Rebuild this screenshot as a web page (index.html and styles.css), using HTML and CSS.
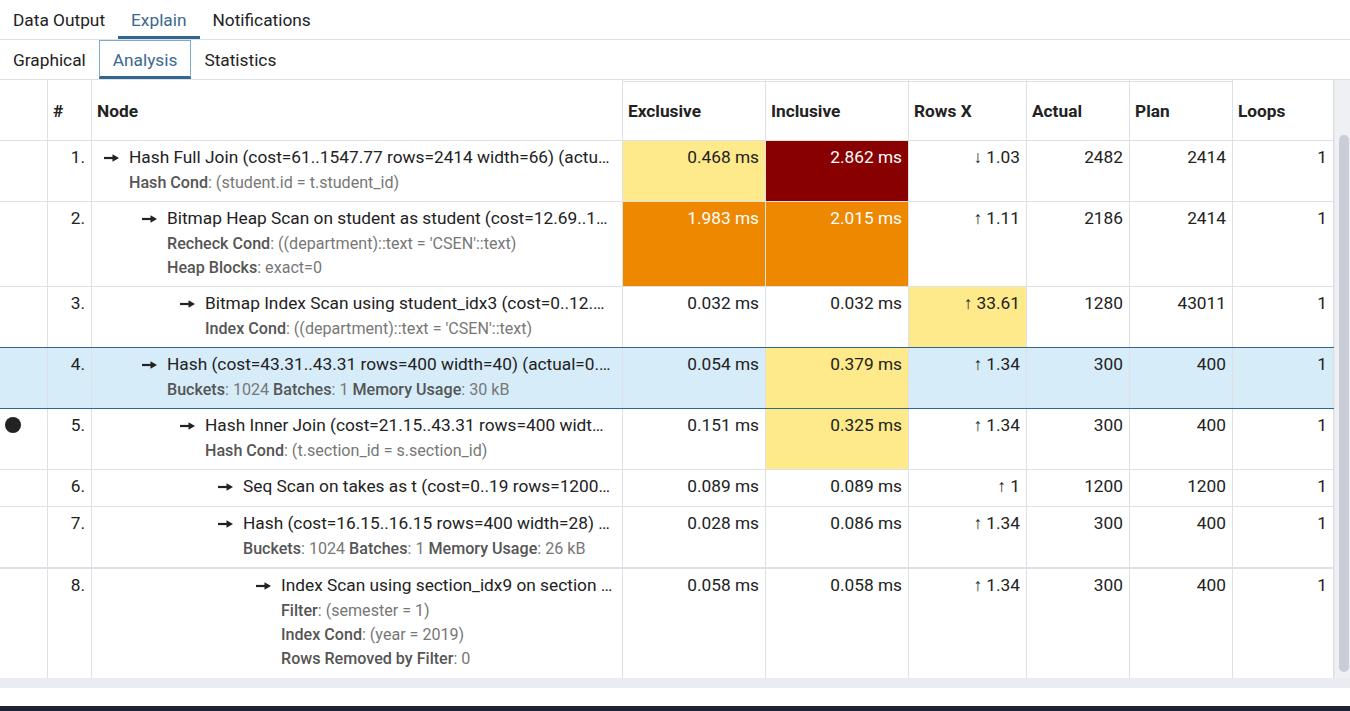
FILE: index.html
```html
<!DOCTYPE html>
<html>
<head>
<meta charset="utf-8">
<title>Explain Analysis</title>
<link rel="stylesheet" href="styles.css">
</head>
<body>
<div class="tabs main-tabs">
  <div class="tab">Data Output</div>
  <div class="tab active">Explain</div>
  <div class="tab">Notifications</div>
</div>
<div class="tabs sub-tabs">
  <div class="tab">Graphical</div>
  <div class="tab active">Analysis</div>
  <div class="tab">Statistics</div>
</div>
<div class="area">
  <div class="table">
    <div class="row head">
      <div class="cell"></div>
      <div class="cell">#</div>
      <div class="cell">Node</div>
      <div class="cell grp">Exclusive</div>
      <div class="cell grp">Inclusive</div>
      <div class="cell grp">Rows X</div>
      <div class="cell grp">Actual</div>
      <div class="cell grp">Plan</div>
      <div class="cell">Loops</div>
    </div>

    <div class="row">
      <div class="cell mark"></div>
      <div class="cell">1.</div>
      <div class="cell node l0">
        <div class="main"><svg class="arr" viewBox="0 0 15 10"><path d="M0 5H10"/><polygon points="8.5,1.2 15,5 8.5,8.8"/></svg><span class="txt">Hash Full Join (cost=61..1547.77 rows=2414 width=66) (actu…</span></div>
        <div class="sub"><b>Hash Cond</b>: (student.id = t.student_id)</div>
      </div>
      <div class="cell yel">0.468 ms</div>
      <div class="cell red">2.862 ms</div>
      <div class="cell">↓ 1.03</div>
      <div class="cell">2482</div>
      <div class="cell">2414</div>
      <div class="cell">1</div>
    </div>

    <div class="row">
      <div class="cell mark"></div>
      <div class="cell">2.</div>
      <div class="cell node l1">
        <div class="main"><svg class="arr" viewBox="0 0 15 10"><path d="M0 5H10"/><polygon points="8.5,1.2 15,5 8.5,8.8"/></svg><span class="txt">Bitmap Heap Scan on student as student (cost=12.69..1…</span></div>
        <div class="sub"><b>Recheck Cond</b>: ((department)::text = 'CSEN'::text)</div>
        <div class="sub"><b>Heap Blocks</b>: exact=0</div>
      </div>
      <div class="cell org">1.983 ms</div>
      <div class="cell org">2.015 ms</div>
      <div class="cell">↑ 1.11</div>
      <div class="cell">2186</div>
      <div class="cell">2414</div>
      <div class="cell">1</div>
    </div>

    <div class="row pre-sel">
      <div class="cell mark"></div>
      <div class="cell">3.</div>
      <div class="cell node l2">
        <div class="main"><svg class="arr" viewBox="0 0 15 10"><path d="M0 5H10"/><polygon points="8.5,1.2 15,5 8.5,8.8"/></svg><span class="txt">Bitmap Index Scan using student_idx3 (cost=0..12.…</span></div>
        <div class="sub"><b>Index Cond</b>: ((department)::text = 'CSEN'::text)</div>
      </div>
      <div class="cell">0.032 ms</div>
      <div class="cell">0.032 ms</div>
      <div class="cell yel">↑ 33.61</div>
      <div class="cell">1280</div>
      <div class="cell">43011</div>
      <div class="cell">1</div>
    </div>

    <div class="row sel">
      <div class="cell mark"></div>
      <div class="cell">4.</div>
      <div class="cell node l1">
        <div class="main"><svg class="arr" viewBox="0 0 15 10"><path d="M0 5H10"/><polygon points="8.5,1.2 15,5 8.5,8.8"/></svg><span class="txt">Hash (cost=43.31..43.31 rows=400 width=40) (actual=0.…</span></div>
        <div class="sub"><b>Buckets</b>: 1024 <b>Batches</b>: 1 <b>Memory Usage</b>: 30 kB</div>
      </div>
      <div class="cell">0.054 ms</div>
      <div class="cell yel">0.379 ms</div>
      <div class="cell">↑ 1.34</div>
      <div class="cell">300</div>
      <div class="cell">400</div>
      <div class="cell">1</div>
    </div>

    <div class="row">
      <div class="cell mark"><span class="dot"></span></div>
      <div class="cell">5.</div>
      <div class="cell node l2">
        <div class="main"><svg class="arr" viewBox="0 0 15 10"><path d="M0 5H10"/><polygon points="8.5,1.2 15,5 8.5,8.8"/></svg><span class="txt">Hash Inner Join (cost=21.15..43.31 rows=400 widt…</span></div>
        <div class="sub"><b>Hash Cond</b>: (t.section_id = s.section_id)</div>
      </div>
      <div class="cell">0.151 ms</div>
      <div class="cell yel">0.325 ms</div>
      <div class="cell">↑ 1.34</div>
      <div class="cell">300</div>
      <div class="cell">400</div>
      <div class="cell">1</div>
    </div>

    <div class="row">
      <div class="cell mark"></div>
      <div class="cell">6.</div>
      <div class="cell node l3">
        <div class="main"><svg class="arr" viewBox="0 0 15 10"><path d="M0 5H10"/><polygon points="8.5,1.2 15,5 8.5,8.8"/></svg><span class="txt">Seq Scan on takes as t (cost=0..19 rows=1200…</span></div>
      </div>
      <div class="cell">0.089 ms</div>
      <div class="cell">0.089 ms</div>
      <div class="cell">↑ 1</div>
      <div class="cell">1200</div>
      <div class="cell">1200</div>
      <div class="cell">1</div>
    </div>

    <div class="row pre-thick">
      <div class="cell mark"></div>
      <div class="cell">7.</div>
      <div class="cell node l3">
        <div class="main"><svg class="arr" viewBox="0 0 15 10"><path d="M0 5H10"/><polygon points="8.5,1.2 15,5 8.5,8.8"/></svg><span class="txt">Hash (cost=16.15..16.15 rows=400 width=28) …</span></div>
        <div class="sub"><b>Buckets</b>: 1024 <b>Batches</b>: 1 <b>Memory Usage</b>: 26 kB</div>
      </div>
      <div class="cell">0.028 ms</div>
      <div class="cell">0.086 ms</div>
      <div class="cell">↑ 1.34</div>
      <div class="cell">300</div>
      <div class="cell">400</div>
      <div class="cell">1</div>
    </div>

    <div class="row last">
      <div class="cell mark"></div>
      <div class="cell">8.</div>
      <div class="cell node l4">
        <div class="main"><svg class="arr" viewBox="0 0 15 10"><path d="M0 5H10"/><polygon points="8.5,1.2 15,5 8.5,8.8"/></svg><span class="txt">Index Scan using section_idx9 on section …</span></div>
        <div class="sub"><b>Filter</b>: (semester = 1)</div>
        <div class="sub"><b>Index Cond</b>: (year = 2019)</div>
        <div class="sub"><b>Rows Removed by Filter</b>: 0</div>
      </div>
      <div class="cell">0.058 ms</div>
      <div class="cell">0.058 ms</div>
      <div class="cell">↑ 1.34</div>
      <div class="cell">300</div>
      <div class="cell">400</div>
      <div class="cell">1</div>
    </div>
  </div>
  <div class="vscroll"><div class="thumb"></div></div>
</div>
<div class="hscroll"></div>
<div class="gap"></div>
<div class="bottom-bar"></div>
</body>
</html>
```
FILE: styles.css
```css
* { box-sizing: border-box; }
body {
  margin: 0;
  width: 1350px;
  height: 711px;
  overflow: hidden;
  background: #fff;
  color: #222;
  font-family: Roboto, "Liberation Sans", sans-serif;
  font-size: 17.3px;
}

/* tabs */
.tabs {
  display: flex;
  height: 40px;
  border-bottom: 1px solid #dde1e6;
}
.tab {
  display: flex;
  align-items: center;
  height: 39px;
  padding: 3px 13px 0;
  border-bottom: 3px solid transparent;
  color: #222;
}
.main-tabs .tab.active {
  color: #3a6890;
  border-bottom-color: #326690;
}
.sub-tabs .tab.active {
  color: #3a6890;
  border: 1px solid #7ea9cf;
  border-bottom: 3px solid #326690;
  padding: 3px 13px 0;
}

/* table area */
.area {
  display: flex;
  height: 598px;
  overflow: hidden;
}
.table {
  width: 1334px;
  display: flex;
  flex-direction: column;
}
.row {
  display: grid;
  grid-template-columns: 48px 44px 531px 143px 143px 118px 103px 103px 101px;
  border-bottom: 1px solid #dde1e6;
}
.cell {
  border-right: 1px solid #dde1e6;
  padding: 3px 6px 6px;
  line-height: 27px;
  text-align: right;
  white-space: nowrap;
  min-width: 0;
}
.head {
  height: 61px;
}
.head .cell {
  display: flex;
  align-items: center;
  padding: 2px 5px 0;
  font-weight: 700;
  text-align: left;
  line-height: 24px;
}
.head .grp {
  box-shadow: inset 0 1px 0 #fff, inset 0 2px 0 #dde1e6;
}

.pre-sel { border-bottom-color: #326690; }
.sel { background: #d6ecf9; border-bottom-color: #326690; }
.pre-thick { border-bottom-width: 2px; }
.last { border-bottom: none; flex: 1; }

.mark { text-align: left; padding-left: 5px; }
.dot {
  display: inline-block;
  width: 16px;
  height: 16px;
  border-radius: 50%;
  background: #222;
  vertical-align: middle;
  margin-top: -2px;
}

/* node column */
.node { text-align: left; padding-right: 5px; }
.l0 { padding-left: 12px; }
.l1 { padding-left: 50px; }
.l2 { padding-left: 88px; }
.l3 { padding-left: 126px; }
.l4 { padding-left: 164px; }
.main {
  display: flex;
  align-items: center;
  gap: 10px;
}
.arr {
  flex: none;
  width: 15px;
  height: 10px;
  fill: #222;
  stroke: #222;
}
.arr path { stroke-width: 2.2; }
.arr polygon { stroke: none; }
.txt {
  overflow: hidden;
  text-overflow: ellipsis;
  white-space: nowrap;
  min-width: 0;
}
.sub {
  padding-left: 25px;
  font-size: 16.1px;
  line-height: 24px;
  color: #777;
}
.sub b {
  font-weight: 500;
  color: #555;
}

/* heat colours */
.yel { background: #feea8a; }
.red { background: #880000; color: #fff; }
.org { background: #ee8800; color: #fff; }

/* scrollbars */
.vscroll {
  width: 16px;
  background: #eef0f3;
  border-left: 1px solid #e3e6ea;
  padding: 55px 0 0 4px;
}
.thumb {
  width: 10px;
  height: 537px;
  border-radius: 5px;
  background: #c9cdd7;
}
.hscroll {
  height: 10px;
  background: #e9ecf0;
}
.gap { height: 18px; }
.bottom-bar {
  height: 5px;
  background: #1d2434;
}
```
